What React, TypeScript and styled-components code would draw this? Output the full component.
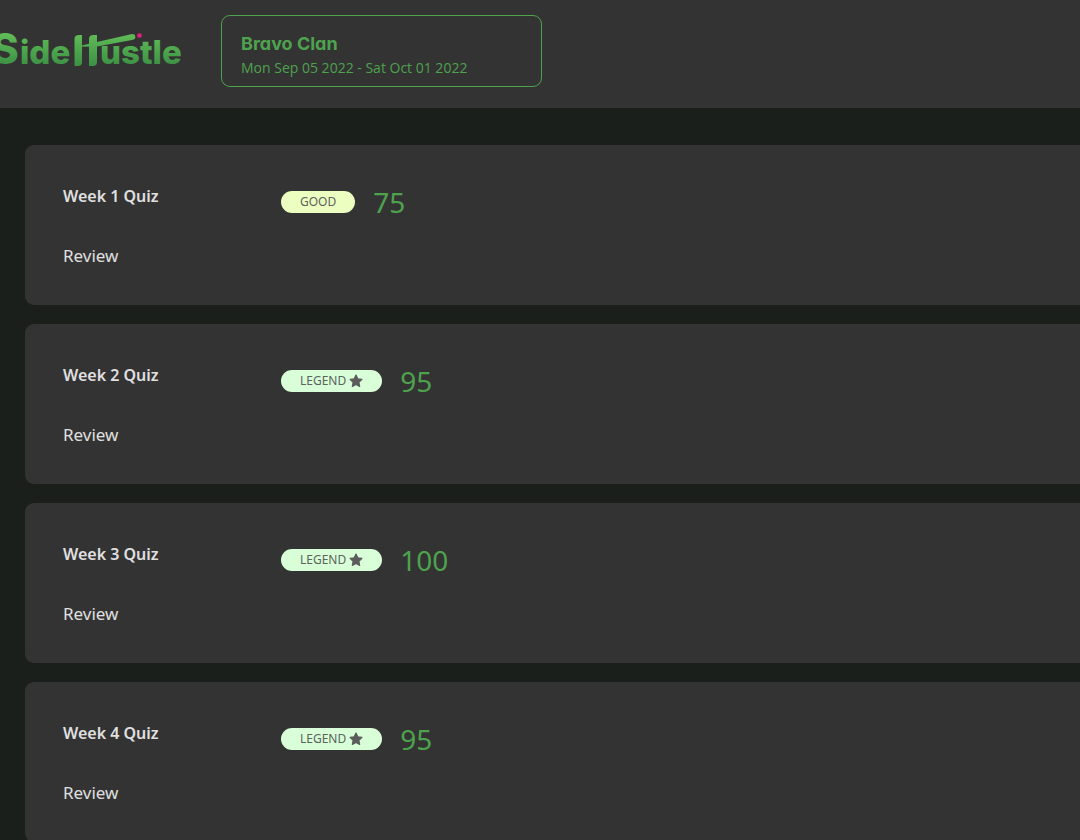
import React from "react";
import styled, { createGlobalStyle } from "styled-components";

const GlobalStyle = createGlobalStyle`
  * { box-sizing: border-box; }
  body {
    margin: 0;
    background: #1b1f1b;
    color: #e0e0e0;
    font-family: "Noto Sans", sans-serif;
    overflow-x: hidden;
  }
`;

const Header = styled.header`
  display: flex;
  align-items: flex-start;
  gap: 36px;
  height: 108px;
  padding-top: 15px;
  background: #333333;
`;

const Logo = styled.svg`
  flex: none;
  display: block;
  width: 185px;
  height: 72px;
  font-family: Inter, sans-serif;
  font-weight: 800;
`;

const ClanCard = styled.section`
  width: 321px;
  height: 72px;
  padding: 16px 19px;
  border: 1px solid #4ea24e;
  border-radius: 9px;
  color: #4ea24e;
`;

const ClanName = styled.h1`
  margin: 0;
  font: 700 18px/24px Inter, sans-serif;
  font-feature-settings: "cv11";
`;

const ClanDates = styled.p`
  margin: 0;
  font-family: "Open Sans", sans-serif;
  font-size: 14px;
  line-height: 24px;
`;

const QuizList = styled.main`
  display: grid;
  gap: 19px;
  padding: 37px 0 37px 25px;
`;

const QuizCard = styled.article`
  display: flex;
  height: 160px;
  padding: 38px;
  background: #333333;
  border-radius: 9px 0 0 9px;
`;

const QuizInfo = styled.div`
  display: flex;
  flex-direction: column;
  align-items: flex-start;
  gap: 34px;
  width: 218px;
`;

const QuizTitle = styled.h2`
  margin: 0;
  font-size: 16px;
  line-height: 26px;
  font-weight: 600;
`;

const ReviewLink = styled.a`
  color: inherit;
  font-size: 17px;
  line-height: 26px;
  text-decoration: none;
`;

const Result = styled.div`
  display: flex;
  align-items: center;
  gap: 18px;
  height: 38px;
`;

const Badge = styled.span<{ $tone: string }>`
  display: flex;
  align-items: center;
  gap: 3px;
  height: 22px;
  padding: 0 19px;
  border-radius: 11px;
  background: ${(p) => p.$tone};
  color: #5c625c;
  font-size: 12px;
  line-height: 22px;
`;

const Score = styled.span`
  color: #4ea24e;
  font-size: 28px;
  line-height: 36px;
`;

const Star = () => (
  <svg width="14" height="14" viewBox="0 0 24 24" aria-hidden="true">
    <path
      fill="#5c5c5c"
      stroke="#5c5c5c"
      strokeWidth="2"
      strokeLinejoin="round"
      d="M12 1.8l3.1 6.5 7.1 1-5.2 5 1.3 7.1L12 18l-6.3 3.4L7 14.3l-5.2-5 7.1-1z"
    />
  </svg>
);

const quizzes = [
  { title: "Week 1 Quiz", score: 75, legend: false },
  { title: "Week 2 Quiz", score: 95, legend: true },
  { title: "Week 3 Quiz", score: 100, legend: true },
  { title: "Week 4 Quiz", score: 95, legend: true },
];

export default function App() {
  return (
    <>
      <GlobalStyle />
      <Header>
        <Logo viewBox="0 15 185 72" role="img" aria-label="SideHustle">
          <defs>
            <linearGradient id="leaf" gradientUnits="userSpaceOnUse" x1="0" y1="33" x2="0" y2="67">
              <stop offset="0" stopColor="#62bd58" />
              <stop offset="1" stopColor="#3a8f43" />
            </linearGradient>
          </defs>
          <g fill="url(#leaf)">
            <text x="-9" y="64" fontSize="42">S</text>
            <text x="20" y="64" fontSize="33">ide</text>
            <text x="100" y="64" fontSize="33">ustle</text>
          </g>
          <g fill="url(#leaf)">
            <path d="M74.500 39Q74.500 35 79 35H82V62Q82 66 78 66H74.500Z" />
            <path d="M89 39Q89 35 93.500 35H97V62Q97 66 93 66H89Z" />
            <path d="M76 46.700L131 34.200Q135 33.600 135.400 36.500Q135.600 39.500 132 40L97 46.500Z" />
          </g>
          <circle cx="139.500" cy="35.500" r="2.300" fill="#e91e7a" />
        </Logo>
        <ClanCard>
          <ClanName>Bravo Clan</ClanName>
          <ClanDates>Mon Sep 05 2022 - Sat Oct 01 2022</ClanDates>
        </ClanCard>
      </Header>
      <QuizList>
        {quizzes.map((quiz) => (
          <QuizCard key={quiz.title}>
            <QuizInfo>
              <QuizTitle>{quiz.title}</QuizTitle>
              <ReviewLink href="#review">Review</ReviewLink>
            </QuizInfo>
            <Result>
              <Badge $tone={quiz.legend ? "#d8ffd8" : "#ecffc0"}>
                {quiz.legend ? "LEGEND" : "GOOD"}
                {quiz.legend && <Star />}
              </Badge>
              <Score>{quiz.score}</Score>
            </Result>
          </QuizCard>
        ))}
      </QuizList>
    </>
  );
}
